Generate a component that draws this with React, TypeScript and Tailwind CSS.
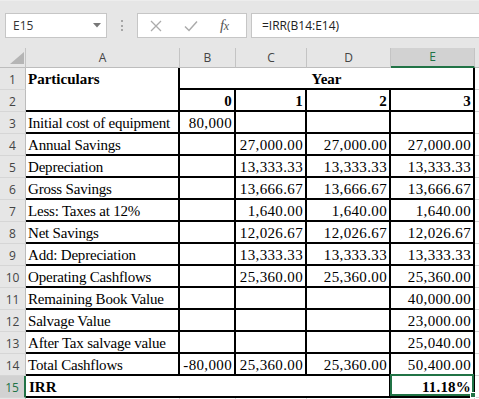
import React from "react";

type Row = { n: number; label: string; b: string; c: string; d: string; e: string };

const rows: Row[] = [
  { n: 3, label: "Initial cost of equipment", b: "80,000", c: "", d: "", e: "" },
  { n: 4, label: "Annual Savings", b: "", c: "27,000.00", d: "27,000.00", e: "27,000.00" },
  { n: 5, label: "Depreciation", b: "", c: "13,333.33", d: "13,333.33", e: "13,333.33" },
  { n: 6, label: "Gross Savings", b: "", c: "13,666.67", d: "13,666.67", e: "13,666.67" },
  { n: 7, label: "Less: Taxes at 12%", b: "", c: "1,640.00", d: "1,640.00", e: "1,640.00" },
  { n: 8, label: "Net Savings", b: "", c: "12,026.67", d: "12,026.67", e: "12,026.67" },
  { n: 9, label: "Add: Depreciation", b: "", c: "13,333.33", d: "13,333.33", e: "13,333.33" },
  { n: 10, label: "Operating Cashflows", b: "", c: "25,360.00", d: "25,360.00", e: "25,360.00" },
  { n: 11, label: "Remaining Book Value", b: "", c: "", d: "", e: "40,000.00" },
  { n: 12, label: "Salvage Value", b: "", c: "", d: "", e: "23,000.00" },
  { n: 13, label: "After Tax salvage value", b: "", c: "", d: "", e: "25,040.00" },
  { n: 14, label: "Total Cashflows", b: "-80,000", c: "25,360.00", d: "25,360.00", e: "50,400.00" },
];

const rowHdr =
  "bg-[#e6e6e6] border-r border-b border-r-[#bcbcbc] border-b-[#d6d6d6] flex items-center justify-center pt-[2px] text-[12px] text-[#444] font-['Open_Sans',sans-serif]";
const labelCell =
  "border-r-2 border-b-2 border-black flex items-end leading-[17px] pl-[2px] tracking-[-0.2px] whitespace-nowrap overflow-hidden";
const numCell =
  "border-r-2 border-b-2 border-black flex items-end justify-end leading-[17px] pr-[2px] tracking-[0.35px] whitespace-nowrap overflow-hidden";
const extraCell = "border-b border-[#d4d4d4]";
const colHdr =
  "border-r border-b border-r-[#c4c4c4] border-b-[#bdbdbd] flex items-center justify-center text-[12px] text-[#444]";

export default function App() {
  return (
    <div className="w-[479px] h-[399px] overflow-hidden bg-white relative">
      {/* Formula bar */}
      <div className="h-[48px] bg-[#e6e6e6] flex items-start pt-[12px] pl-[5px] font-['Open_Sans',sans-serif] border-t border-t-[#ededed]">
        <div className="w-[102px] h-[25px] shrink-0 bg-white border border-[#c6c6c6] flex items-center pl-[7px] pr-[5px] text-[12px] text-[#333]">
          <span className="flex-1">E15</span>
          <svg width="8" height="5" viewBox="0 0 8 5">
            <polygon points="0,0 8,0 4,4.5" fill="#777" />
          </svg>
        </div>
        <div className="w-[30px] h-[25px] shrink-0 flex flex-col items-center justify-center gap-[2.5px]">
          <div className="w-[2px] h-[2px] bg-[#a6a6a6]" />
          <div className="w-[2px] h-[2px] bg-[#a6a6a6]" />
          <div className="w-[2px] h-[2px] bg-[#a6a6a6]" />
        </div>
        <div className="w-[110px] h-[25px] shrink-0 bg-white border border-[#c6c6c6] flex items-center pl-[12px]">
          <svg width="12" height="12" viewBox="0 0 12 12" className="shrink-0">
            <path d="M1 1 L11 11 M11 1 L1 11" stroke="#ababab" strokeWidth="1.3" fill="none" />
          </svg>
          <svg width="14" height="12" viewBox="0 0 14 12" className="ml-[22px] shrink-0">
            <path d="M1 6.5 L5 10.5 L13 1.5" stroke="#ababab" strokeWidth="1.5" fill="none" />
          </svg>
          <span className="ml-[22px] font-['Liberation_Serif',serif] italic text-[15px] leading-none text-[#555] tracking-[-0.5px]">
            f<span className="text-[12px]">x</span>
          </span>
        </div>
        <div className="w-[240px] h-[25px] shrink-0 ml-[4px] bg-white border border-[#c6c6c6] flex items-center pl-[10px] text-[12px] text-[#222]">
          =IRR(B14:E14)
        </div>
      </div>

      {/* Column headers */}
      <div className="grid grid-cols-[26px_154px_56px_71px_84px_84px_1fr] h-[20px] bg-[#e6e6e6] font-['Open_Sans',sans-serif]">
        <div className="relative border-r border-b border-r-[#c4c4c4] border-b-[#bdbdbd]">
          <svg width="14" height="12" viewBox="0 0 14 12" className="absolute left-[10px] top-[4px]">
            <polygon points="14,0 14,12 0,12" fill="#b5b5b5" />
          </svg>
        </div>
        <div className={colHdr}>A</div>
        <div className={colHdr}>B</div>
        <div className={colHdr}>C</div>
        <div className={colHdr}>D</div>
        <div className="bg-[#d2d2d2] border-r border-r-[#c4c4c4] border-b-2 border-b-[#217346] flex items-center justify-center text-[12px] text-[#217346]">
          E
        </div>
        <div className="border-b border-b-[#bdbdbd]" />
      </div>

      {/* Body */}
      <div className="grid grid-cols-[26px_154px_56px_71px_84px_84px_1fr] auto-rows-[22px] font-['Liberation_Serif',serif] text-[15px] text-black">
        {/* Row 1 */}
        <div className={rowHdr}>1</div>
        <div className="border-r-2 border-black flex items-end leading-[17px] pl-[2px] pb-[2px] font-bold whitespace-nowrap">
          Particulars
        </div>
        <div className="col-span-4 border-r-2 border-b-2 border-black flex items-end justify-center leading-[17px] font-bold">
          Year
        </div>
        <div className={extraCell} />

        {/* Row 2 */}
        <div className={rowHdr}>2</div>
        <div className="border-r-2 border-b-2 border-black" />
        <div className={numCell + " font-bold"}>0</div>
        <div className={numCell + " font-bold"}>1</div>
        <div className={numCell + " font-bold"}>2</div>
        <div className={numCell + " font-bold"}>3</div>
        <div className={extraCell} />

        {rows.map((r) => (
          <React.Fragment key={r.n}>
            <div className={rowHdr}>{r.n}</div>
            <div className={labelCell}>{r.label}</div>
            <div className={numCell}>{r.b}</div>
            <div className={numCell}>{r.c}</div>
            <div className={numCell}>{r.d}</div>
            <div className={numCell}>{r.e}</div>
            <div className={extraCell} />
          </React.Fragment>
        ))}

        {/* Row 15 */}
        <div className="bg-[#d2d2d2] border-r-2 border-r-[#217346] border-b border-b-[#d6d6d6] flex items-center justify-center pt-[2px] text-[12px] text-[#217346] font-['Open_Sans',sans-serif]">
          15
        </div>
        <div className="col-span-4 border-r-2 border-b-2 border-black flex items-end leading-[17px] pl-[3px] font-bold">
          IRR
        </div>
        <div className="relative border-r-2 border-b-2 border-black flex items-end justify-end leading-[17px] pr-[2px] font-bold tracking-[0.2px]">
          11.18%
          <div className="absolute left-[-1px] top-[-2px] right-[-1px] bottom-0 border-2 border-[#217346] z-10" />
          <div className="absolute right-[-3px] bottom-[-2px] w-[6px] h-[6px] bg-[#217346] border border-white z-20" />
        </div>
        <div className={extraCell} />

        {/* Row 16 (mostly out of view) */}
        <div className="bg-[#e6e6e6] border-r border-r-[#bcbcbc]" />
        <div className="border-r border-b border-[#d4d4d4]" />
        <div className="border-r border-b border-[#d4d4d4]" />
        <div className="border-r border-b border-[#d4d4d4]" />
        <div className="border-r border-b border-[#d4d4d4]" />
        <div className="border-r border-b border-[#d4d4d4]" />
        <div className={extraCell} />
      </div>
    </div>
  );
}
